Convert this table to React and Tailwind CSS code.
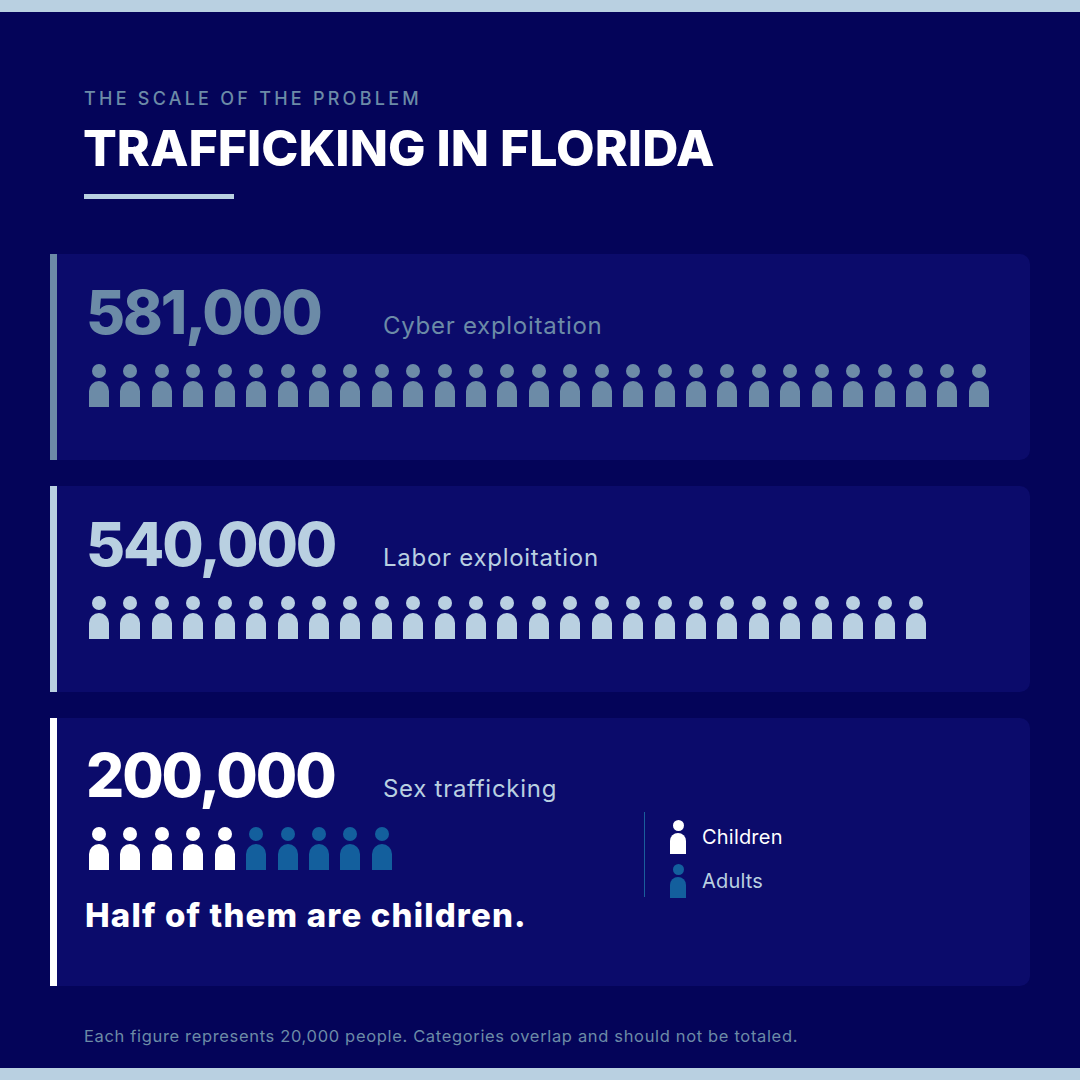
import React from "react";

const font = { fontFamily: "Inter, 'Noto Sans', sans-serif" };

function Figure({ color, size = "lg" }) {
  if (size === "sm") {
    return (
      <div className="flex w-[16px] flex-col items-center">
        <div className={`h-[11px] w-[11px] rounded-full ${color}`} />
        <div className={`mt-[2px] h-[21px] w-[16px] rounded-t-[8px] ${color}`} />
      </div>
    );
  }
  return (
    <div className="flex w-[20px] flex-col items-center">
      <div className={`h-[14px] w-[14px] rounded-full ${color}`} />
      <div className={`mt-[3px] h-[26px] w-[20px] rounded-t-[10px] ${color}`} />
    </div>
  );
}

function Row({ colors }) {
  return (
    <div className="ml-[3px] mt-[22px] flex gap-[11.43px]">
      {colors.map((c, i) => (
        <Figure key={i} color={c} />
      ))}
    </div>
  );
}

function Header({ number, label, numColor, labelColor }) {
  return (
    <div className="flex items-baseline">
      <div className={`w-[297px] text-[60px] font-extrabold leading-none tracking-[-0.035em] ${numColor}`}>
        {number}
      </div>
      <div className={`text-[24px] leading-none tracking-[0.03em] ${labelColor}`}>{label}</div>
    </div>
  );
}

export default function App() {
  const slate = "bg-[#6c8ba7]";
  const light = "bg-[#b9d0e1]";
  return (
    <div style={font} className="flex h-[1080px] w-[1080px] flex-col bg-[#040459]">
      <div className="h-[12px] bg-[#b9d0e1]" />
      <div className="flex flex-1 flex-col">
        <div className="ml-[84px] mt-[78px] text-[18px] font-medium uppercase leading-none tracking-[0.18em] text-[#6c8ba7]">
          The scale of the problem
        </div>
        <div className="ml-[83px] mt-[15px] text-[50px] font-extrabold leading-none text-white">
          TRAFFICKING IN FLORIDA
        </div>
        <div className="ml-[84px] mt-[21px] h-[5px] w-[150px] bg-[#b9d0e1]" />

        <div className="mx-[50px] mt-[55px] flex flex-col gap-[26px]">
          <div className="h-[206px] rounded-r-[10px] border-l-[7px] border-[#6c8ba7] bg-[#0b0b6b] pl-[29px] pt-[28px]">
            <Header number="581,000" label="Cyber exploitation" numColor="text-[#6c8ba7]" labelColor="text-[#6c8ba7]" />
            <Row colors={Array(29).fill(slate)} />
          </div>

          <div className="h-[206px] rounded-r-[10px] border-l-[7px] border-[#b9d0e1] bg-[#0b0b6b] pl-[29px] pt-[28px]">
            <Header number="540,000" label="Labor exploitation" numColor="text-[#b9d0e1]" labelColor="text-[#b9d0e1]" />
            <Row colors={Array(27).fill(light)} />
          </div>

          <div className="flex h-[268px] rounded-r-[10px] border-l-[7px] border-white bg-[#0b0b6b] pl-[29px] pt-[27px]">
            <div className="w-[558px]">
              <Header number="200,000" label="Sex trafficking" numColor="text-white" labelColor="text-[#b9d0e1]" />
              <Row colors={[...Array(5).fill("bg-white"), ...Array(5).fill("bg-[#135f9d]")]} />
              <div className="-ml-[1px] mt-[29px] text-[33px] font-extrabold leading-none tracking-[0.035em] text-white">
                Half of them are children.
              </div>
            </div>
            <div className="mt-[67px] flex h-[85px] flex-col gap-[10px] self-start border-l border-[#1a5f9c] pl-[25px] pt-[8px]">
              <div className="flex items-center gap-[16px]">
                <Figure color="bg-white" size="sm" />
                <span className="text-[20px] leading-none tracking-[0.01em] text-white">Children</span>
              </div>
              <div className="flex items-center gap-[16px]">
                <Figure color="bg-[#135f9d]" size="sm" />
                <span className="text-[20px] leading-none tracking-[0.01em] text-[#b9d0e1]">Adults</span>
              </div>
            </div>
          </div>
        </div>

        <div className="ml-[84px] mt-[42px] text-[16.5px] leading-none tracking-[0.04em] text-[#6c8ba7]">
          Each figure represents 20,000 people. Categories overlap and should not be totaled.
        </div>
      </div>
      <div className="h-[12px] bg-[#b9d0e1]" />
    </div>
  );
}
